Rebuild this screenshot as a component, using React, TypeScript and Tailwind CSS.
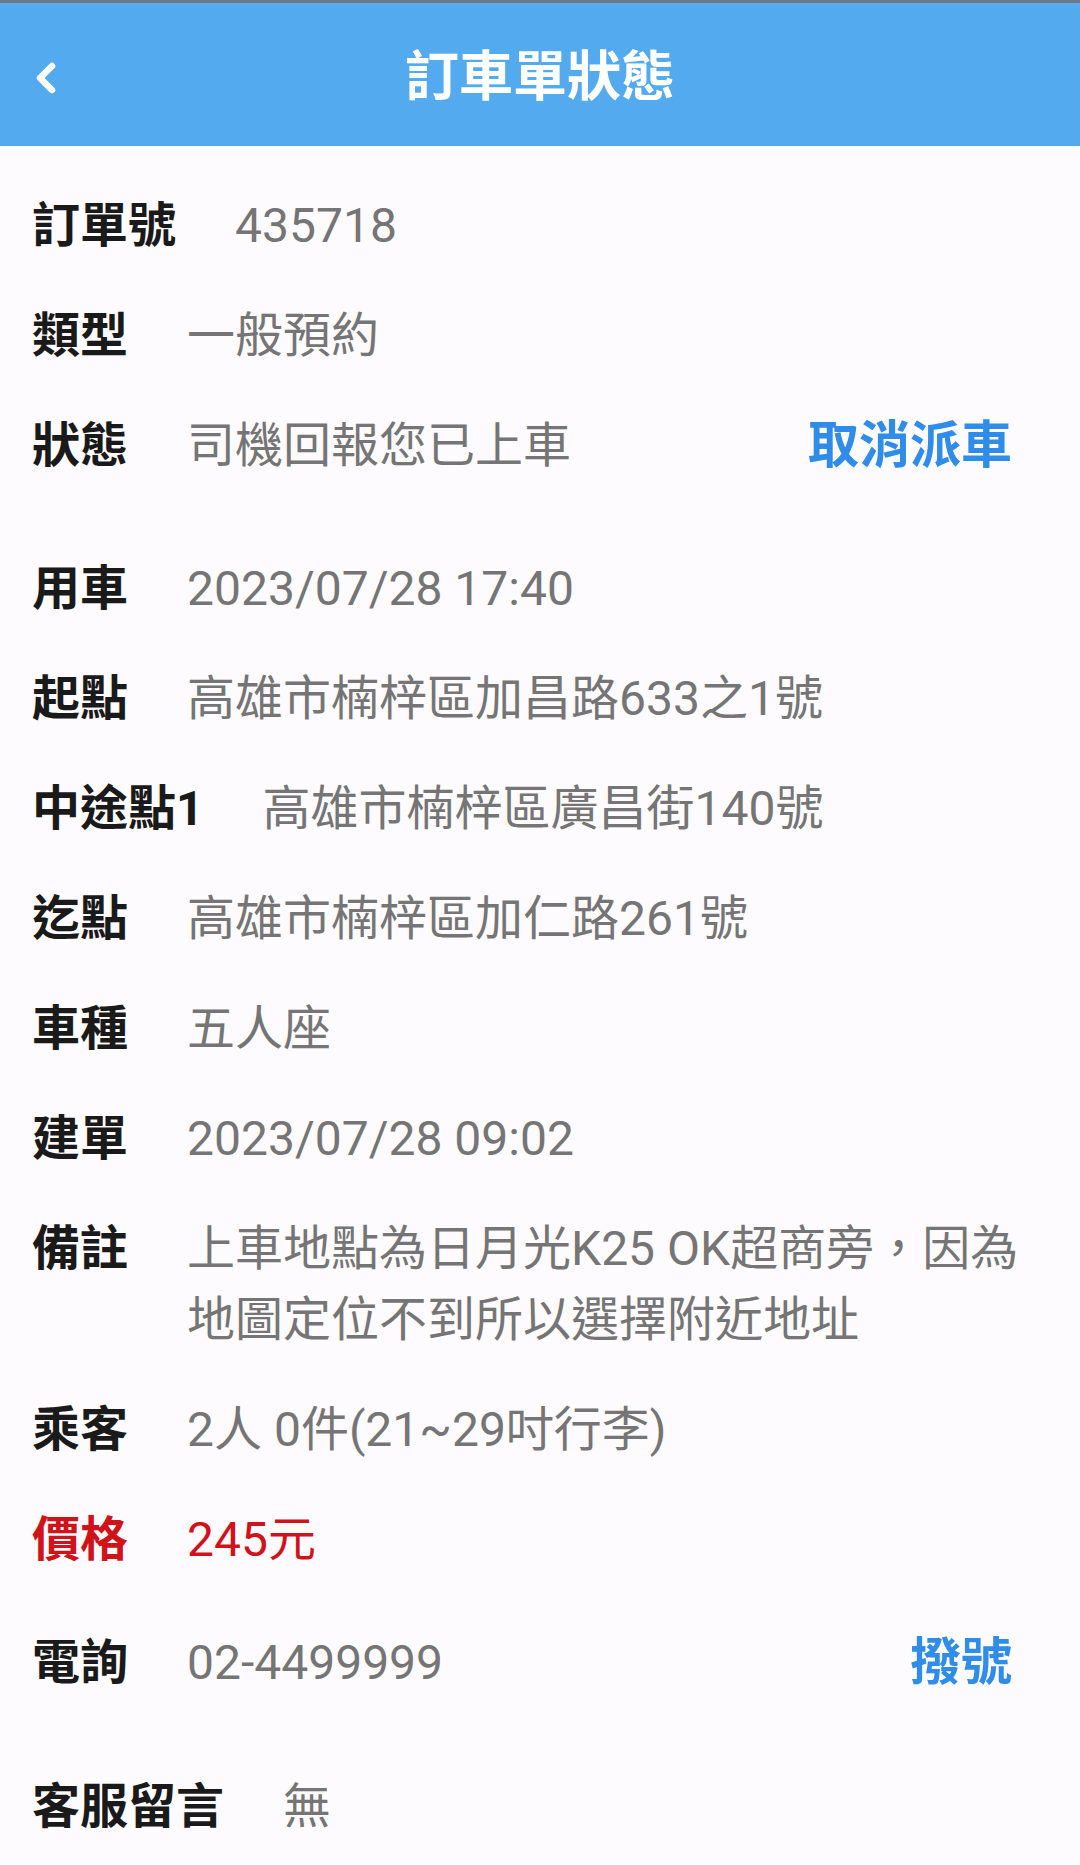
import React from "react";

const font = { fontFamily: "Roboto, 'Noto Sans CJK TC', sans-serif" };

function Row({
  label,
  value,
  mb = "mb-[39px]",
  red = false,
  action,
}: {
  label: string;
  value: React.ReactNode;
  mb?: string;
  red?: boolean;
  action?: string;
}) {
  return (
    <div className={`flex items-start ${mb}`}>
      <div
        className={`shrink-0 font-bold text-[48px] leading-[71px] ${
          red ? "text-[#d0121b]" : "text-[#1a1a1a]"
        }`}
      >
        {label}
      </div>
      <div
        className={`ml-[59px] flex-1 text-[48px] leading-[71px] ${
          red ? "text-[#d0121b]" : "text-[#757575]"
        }`}
      >
        {value}
      </div>
      {action && (
        <div className="shrink-0 font-bold text-[51px] leading-[71px] text-[#2f8ce9]">
          {action}
        </div>
      )}
    </div>
  );
}

export default function App() {
  return (
    <div className="w-[1080px] min-h-[1865px] bg-[#fefbfe]" style={font}>
      <div className="h-[3px] bg-[#6d7a86]" />
      <div className="relative h-[143px] bg-[#53aaee] flex items-center justify-center">
        <svg
          className="absolute left-[33px] top-[57px]"
          width="26"
          height="36"
          viewBox="0 0 26 36"
        >
          <path
            d="M19 6 L7 18 L19 30"
            fill="none"
            stroke="#ffffff"
            strokeWidth="6.5"
            strokeLinecap="round"
            strokeLinejoin="round"
          />
        </svg>
        <div className="text-white font-bold text-[54px] leading-none pt-[6px]">訂車單狀態</div>
      </div>
      <div className="pl-[32px] pr-[68px] pt-[44px]">
        <Row label="訂單號" value="435718" />
        <Row label="類型" value="一般預約" />
        <Row label="狀態" value="司機回報您已上車" action="取消派車" mb="mb-[72px]" />
        <Row label="用車" value="2023/07/28 17:40" />
        <Row label="起點" value="高雄市楠梓區加昌路633之1號" />
        <Row label="中途點1" value="高雄市楠梓區廣昌街140號" />
        <Row label="迄點" value="高雄市楠梓區加仁路261號" />
        <Row label="車種" value="五人座" />
        <Row label="建單" value="2023/07/28 09:02" />
        <Row
          label="備註"
          value={
            <span className="whitespace-nowrap">
              上車地點為日月光K25 OK超商旁，因為
              <br />
              地圖定位不到所以選擇附近地址
            </span>
          }
        />
        <Row label="乘客" value="2人 0件(21~29吋行李)" />
        <Row label="價格" value="245元" red mb="mb-[52px]" />
        <Row label="電詢" value="02-4499999" action="撥號" mb="mb-[73px]" />
        <Row label="客服留言" value="無" />
      </div>
    </div>
  );
}
